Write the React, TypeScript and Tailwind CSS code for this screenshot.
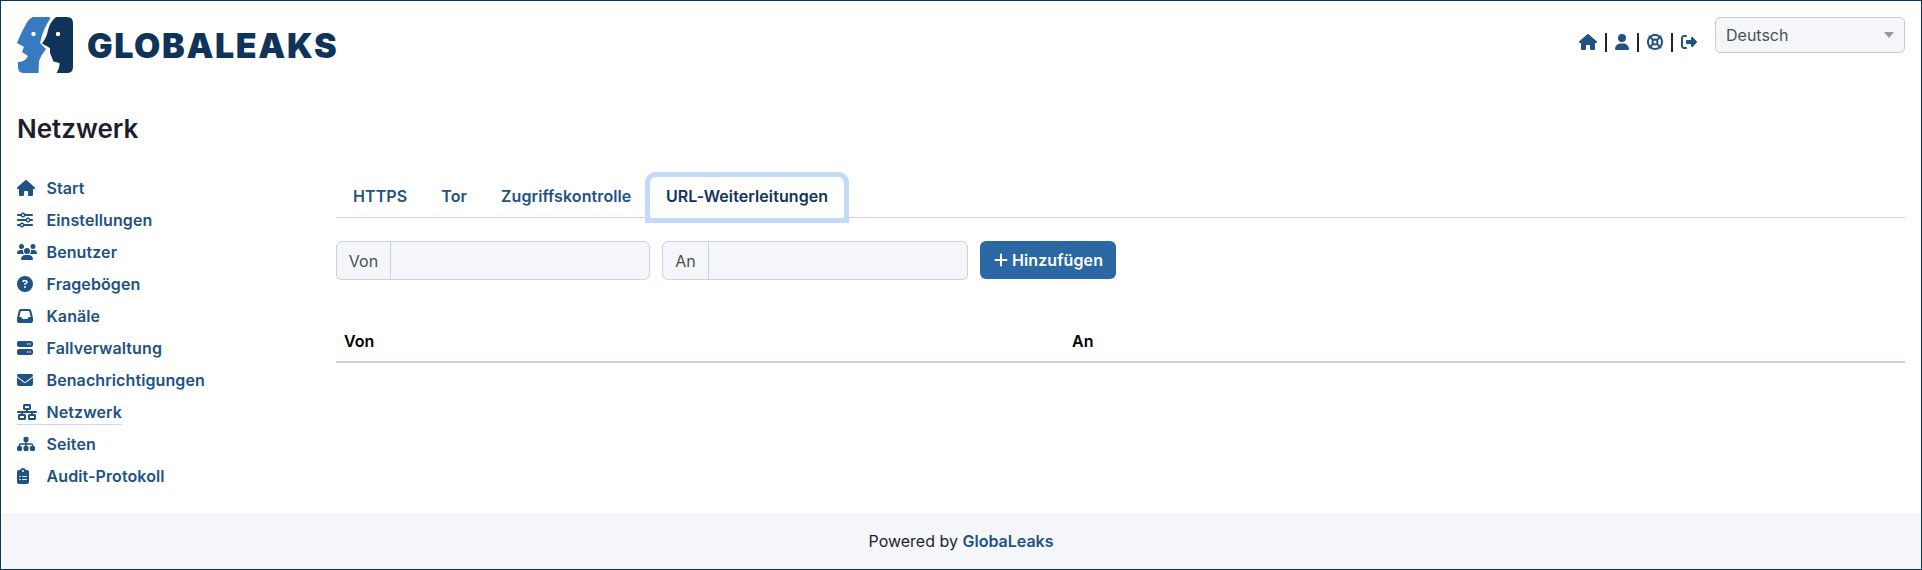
import { FaHouse, FaUser, FaLifeRing, FaRightFromBracket, FaSliders, FaUsers, FaCircleQuestion, FaInbox, FaServer, FaEnvelope, FaNetworkWired, FaSitemap, FaClipboardList, FaPlus } from "react-icons/fa6";

const navItems = [
  { label: "Start", icon: FaHouse, size: "w-[18px] h-[16px]" },
  { label: "Einstellungen", icon: FaSliders, size: "w-[16px] h-[16px]" },
  { label: "Benutzer", icon: FaUsers, size: "w-[20px] h-[16px]" },
  { label: "Fragebögen", icon: FaCircleQuestion, size: "w-[16px] h-[16px]" },
  { label: "Kanäle", icon: FaInbox, size: "w-[16px] h-[16px]" },
  { label: "Fallverwaltung", icon: FaServer, size: "w-[16px] h-[16px]" },
  { label: "Benachrichtigungen", icon: FaEnvelope, size: "w-[16px] h-[16px]" },
  { label: "Netzwerk", icon: FaNetworkWired, size: "w-[20px] h-[16px]", active: true },
  { label: "Seiten", icon: FaSitemap, size: "w-[18px] h-[16px]" },
  { label: "Audit-Protokoll", icon: FaClipboardList, size: "w-[12px] h-[16px]" },
];

function Logo() {
  return (
    <svg width="56" height="57" viewBox="0 0 56 57" className="shrink-0">
      <path fill="#377abf" d="M16 0 H31 Q34 0 33 2 Q26 12 23 26 L29 32 Q24 38 22 44 L21.5 56 H7 Q1 56 1 50 V45 Q8 45 11 39 L5 35 L7 30 L0 26 Q3 18 8 9 Q11 2 16 0 Z" />
      <circle cx="16.5" cy="17" r="2.2" fill="#fff" />
      <path fill="#10335a" d="M39 0 H50 Q56 0 56 6 V50 Q56 56 50 56 H39.5 Q43 50 42.5 46 L36.5 44.5 L33 36 L33 31 L25 26.5 Q30 20 31 13 Q33 5 39 0 Z" />
      <circle cx="41" cy="17" r="2.2" fill="#fff" />
    </svg>
  );
}

export default function App() {
  return (
    <div className="h-[570px] w-[1922px] flex flex-col border border-[#0f3557] bg-white text-[#212529] overflow-hidden" style={{ fontFamily: "Inter, sans-serif" }}>
      <header className="flex justify-between pl-[16px] pr-[16px] pt-[16px] h-[113px] shrink-0">
        <div className="flex items-center h-[57px] gap-[14px]">
          <Logo />
          <span className="text-[34px] font-black tracking-[1.6px] text-[#10335a]">GLOBALEAKS</span>
        </div>
        <div className="flex items-start gap-[18px]">
          <div className="flex items-center h-[20px] mt-[15px] text-[#205283] text-[16px]">
            <FaHouse className="w-[18px] h-[16px]" />
            <span className="mx-[8px] w-[2px] h-[19px] bg-[#212529]" />
            <FaUser className="w-[14px] h-[16px]" />
            <span className="mx-[8px] w-[2px] h-[19px] bg-[#212529]" />
            <FaLifeRing />
            <span className="mx-[8px] w-[2px] h-[19px] bg-[#212529]" />
            <FaRightFromBracket />
          </div>
          <div className="w-[190px] h-[36px] flex items-center justify-between px-[10px] rounded-[5px] border border-[#c8cacd] bg-[#f5f6fa] text-[16px] text-[#495057]">
            <span>Deutsch</span>
            <span className="w-0 h-0 border-x-[5px] border-x-transparent border-t-[6px] border-t-[#999]" />
          </div>
        </div>
      </header>

      <h1 className="pl-[16px] text-[26px] leading-[29px] font-semibold text-[#1c1e2c]">Netzwerk</h1>

      <div className="flex flex-1 min-h-0 pr-[16px]">
        <nav className="w-[319px] shrink-0 pl-[16px] pt-[29px]">
          {navItems.map((item) => (
            <div key={item.label} className="h-[32px] flex items-center">
              <div className={`flex items-center h-[25px] text-[#205283] font-semibold tracking-[0.1px] text-[16px] ${item.active ? "border-b border-[#cdd5e6]" : ""}`}>
                <span className="w-[29.5px] flex"><item.icon className={item.size} /></span>
                {item.label}
              </div>
            </div>
          ))}
        </nav>
        <main className="flex-1 min-w-0 pt-[31px] ml-[16px]">
          <div className="flex h-[44px] items-stretch border-b border-[#c9d2e0] font-semibold tracking-[0.1px] text-[16px] text-[#205283]">
            <span className="px-[17px] flex items-center">HTTPS</span>
            <span className="px-[17px] flex items-center">Tor</span>
            <span className="px-[17px] flex items-center">Zugriffskontrolle</span>
            <span className="relative ml-[1.5px] mt-[3px] h-[41px] pb-[3px] px-[16px] flex items-center text-[#10335a] bg-white rounded-t-[6px] shadow-[0_0_0_5px_#c2d9f8]">URL-Weiterleitungen</span>
          </div>
          <div className="flex gap-[12px] mt-[23px]">
            <div className="w-[314px] h-[39px] flex rounded-[6px] border border-[#c9d2e0] bg-[#f5f6fa] text-[16px] text-[#495057]">
              <span className="w-[54px] border-r border-[#c9d2e0] flex items-center justify-center">Von</span>
            </div>
            <div className="w-[306px] h-[39px] flex rounded-[6px] border border-[#c9d2e0] bg-[#f5f6fa] text-[16px] text-[#495057]">
              <span className="w-[46px] border-r border-[#c9d2e0] flex items-center justify-center">An</span>
            </div>
            <button className="w-[136px] h-[38px] flex items-center justify-center gap-[3px] rounded-[6px] bg-[#2a67a3] text-white font-semibold tracking-[0.1px] text-[16px]">
              <FaPlus className="text-[16px]" />
              Hinzufügen
            </button>
          </div>
          <div className="mt-[41px] grid grid-cols-[728px_1fr] border-b-2 border-[#c9d2e0] font-semibold text-[16px] text-black h-[42px]">
            <span className="pl-[8px] pt-[8px]">Von</span>
            <span className="pl-[8px] pt-[8px]">An</span>
          </div>
        </main>
      </div>

      <footer className="h-[56px] shrink-0 bg-[#f5f6fa] flex items-center justify-center text-[16px] text-[#212529]">
        Powered by&nbsp;<span className="font-semibold text-[#205283]">GlobaLeaks</span>
      </footer>
    </div>
  );
}
